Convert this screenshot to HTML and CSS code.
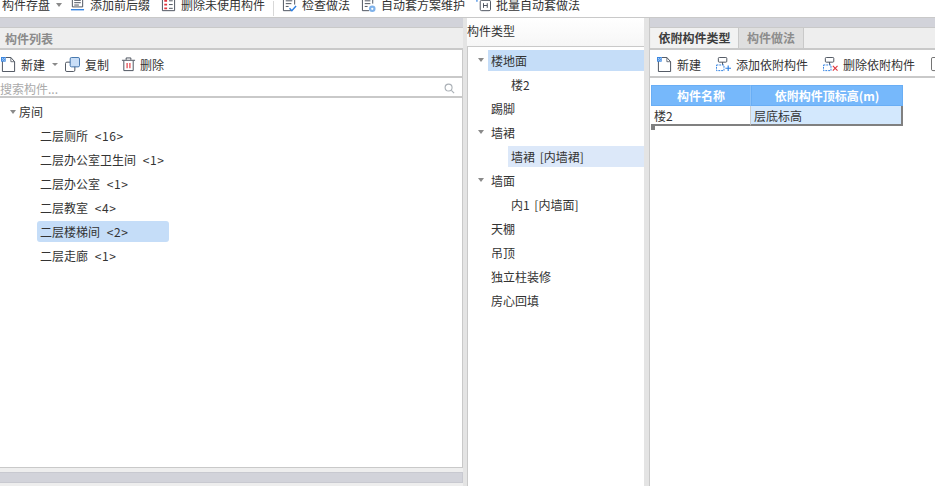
FILE: index.html
```html
<!DOCTYPE html>
<html lang="zh">
<head>
<meta charset="utf-8">
<title>构件</title>
<link rel="stylesheet" href="styles.css">
</head>
<body>
<div class="app">
  <div class="topbar">
    <span class="tb tb-save">构件存盘</span><i class="caret caret-top"></i>
    <svg class="ic15 tb-i1" viewBox="0 0 16 16"><path d="M2.500 0v9.500h11V0M4.500 2.500h7M4.500 5h7M4.500 7.500h5" fill="none" stroke="#444c58"/><path d="M1 12.500h14" stroke="#2a7de1" stroke-width="1.400"/></svg>
    <span class="tb">添加前后缀</span>
    <svg class="ic15 tb-i2" viewBox="0 0 16 16"><path d="M1.500 0v13.500h13V0" fill="none" stroke="#444c58"/><path d="M3.500 2h3v2h-3zM3.500 6h3v2h-3zM3.500 10h3v2h-3z" fill="#e0343c"/><path d="M8.500 3h4M8.500 7h4M8.500 11h4" stroke="#444c58"/></svg>
    <span class="tb">删除未使用构件</span>
    <i class="divider"></i>
    <svg class="ic15 tb-i3" viewBox="0 0 16 16"><path d="M1.500 0v13.500h8M13.500 0v7M4 3h7M4 6h6M4 9h3" fill="none" stroke="#444c58"/><path d="M8 11l2.500 2.500L15 8.500" fill="none" stroke="#2a7de1" stroke-width="1.500"/></svg>
    <span class="tb">检查做法</span>
    <svg class="ic15 tb-i4" viewBox="0 0 16 16"><path d="M1.500 0v13.500h7M12.500 0v6M4 3h6M4 6h6M4 9h3" fill="none" stroke="#444c58"/><circle cx="12" cy="11.500" r="3.500" fill="#7fb2ea"/><circle cx="12" cy="11.500" r="1.200" fill="#fff"/></svg>
    <span class="tb">自动套方案维护</span>
    <svg class="ic15 tb-i5" viewBox="0 0 16 16"><path d="M1 0v4M3.500 0v2" stroke="#2a7de1" stroke-width="1.200"/><rect x="4.500" y="2.500" width="11" height="11" rx="1.500" fill="none" stroke="#444c58"/><path d="M8 5.500v5M12 5.500v5M8 8h4" stroke="#444c58"/></svg>
    <span class="tb">批量自动套做法</span>
  </div>

  <div class="main">
    <section class="left">
      <div class="band"></div>
      <div class="panel-head"><span class="head-title">构件列表</span></div>
      <div class="tools">
        <svg class="ic15 lt-new" viewBox="0 0 16 16"><use href="#new-doc"/></svg>
        <span>新建</span>
        <i class="caret caret-new"></i>
        <svg class="ic15 lt-copy" viewBox="0 0 16 16"><rect x="0.500" y="5.500" width="10" height="10" rx="1.500" fill="#fff" stroke="#444c58"/><rect x="5.500" y="0.500" width="10" height="10" rx="1.500" fill="#c9def7" stroke="#3a6ea8"/></svg>
        <span>复制</span>
        <svg class="ic15 lt-del" viewBox="0 0 16 16"><path d="M1 3.500h14M5.500 3V1h5v2M3 4v10.500h10V4" fill="none" stroke="#444c58"/><path d="M6.500 6.500v5.500M9.500 6.500v5.500" stroke="#e0343c" stroke-width="1.200"/></svg>
        <span>删除</span>
      </div>
      <div class="search">
        <span class="search-ph">搜索构件...</span>
        <svg class="search-ic" viewBox="0 0 12 12"><circle cx="5" cy="5" r="3.800" fill="none" stroke="#aab0b6" stroke-width="1.200"/><path d="M8 8l3 3" stroke="#aab0b6" stroke-width="1.300"/></svg>
      </div>
      <div class="list">
        <div class="row root"><i class="caret caret-tree"></i><span class="cell">房间</span></div>
        <div class="row item"><span class="cell">二层厕所 <em>&lt;16&gt;</em></span></div>
        <div class="row item"><span class="cell">二层办公室卫生间 <em>&lt;1&gt;</em></span></div>
        <div class="row item"><span class="cell">二层办公室 <em>&lt;1&gt;</em></span></div>
        <div class="row item"><span class="cell">二层教室 <em>&lt;4&gt;</em></span></div>
        <div class="row item"><span class="cell active">二层楼梯间 <em>&lt;2&gt;</em></span></div>
        <div class="row item"><span class="cell">二层走廊 <em>&lt;1&gt;</em></span></div>
      </div>
      <div class="hscroll"><div class="thumb"></div></div>
    </section>

    <div class="splitter"></div>

    <section class="mid">
      <div class="mid-head">构件类型</div>
      <div class="mid-tree">
        <div class="node"><i class="caret caret-mid"></i><span class="label sel">楼地面</span></div>
        <div class="node child"><span class="label">楼2</span></div>
        <div class="node"><span class="label">踢脚</span></div>
        <div class="node"><i class="caret caret-mid"></i><span class="label">墙裙</span></div>
        <div class="node child"><span class="label sel2">墙裙 [内墙裙]</span></div>
        <div class="node"><i class="caret caret-mid"></i><span class="label">墙面</span></div>
        <div class="node child"><span class="label">内1 [内墙面]</span></div>
        <div class="node"><span class="label">天棚</span></div>
        <div class="node"><span class="label">吊顶</span></div>
        <div class="node"><span class="label">独立柱装修</span></div>
        <div class="node"><span class="label">房心回填</span></div>
      </div>
    </section>

    <div class="splitter2"></div>

    <section class="right">
      <div class="band"></div>
      <div class="tabs">
        <span class="tab on">依附构件类型</span>
        <span class="tab off">构件做法</span>
      </div>
      <div class="tools rtools">
        <svg class="ic15 rt-new" viewBox="0 0 16 16"><use href="#new-doc"/></svg>
        <span>新建</span>
        <svg class="ic15 rt-add" viewBox="0 0 16 16"><rect x="2.500" y="0.500" width="9" height="5" rx="1" fill="none" stroke="#444c58"/><path d="M7 5.500v3" stroke="#444c58"/><rect x="0.500" y="8.500" width="8" height="6" fill="none" stroke="#2a7de1" stroke-dasharray="2 1"/><path d="M10 12h6M13 9v6" stroke="#2a7de1" stroke-width="1.200"/></svg>
        <span>添加依附构件</span>
        <svg class="ic15 rt-del" viewBox="0 0 16 16"><rect x="2.500" y="0.500" width="9" height="5" rx="1" fill="none" stroke="#444c58"/><path d="M7 5.500v3" stroke="#444c58"/><rect x="0.500" y="8.500" width="8" height="6" fill="none" stroke="#2a7de1" stroke-dasharray="2 1"/><path d="M10.500 9.500l5 5M15.500 9.500l-5 5" stroke="#e0343c" stroke-width="1.200"/></svg>
        <span>删除依附构件</span>
        <svg class="ic15 rt-more" viewBox="0 0 16 16"><rect x="0.500" y="0.500" width="14" height="14" rx="1.500" fill="none" stroke="#666"/></svg>
      </div>
      <div class="table-wrap">
        <div class="grid">
          <div class="gh g1">构件名称</div>
          <div class="gh g2">依附构件顶标高(m)</div>
          <div class="gc g1">楼2</div>
          <div class="gc g2 cur">层底标高</div>
          <i class="handle"></i>
        </div>
      </div>
    </section>
  </div>
</div>
<svg class="defs" width="0" height="0">
  <defs>
    <g id="new-doc">
      <path d="M1.500 4v11.500h13V5L10.500 0.500H5" fill="none" stroke="#444c58"/>
      <path d="M10.500 0.500V5h4" fill="none" stroke="#444c58" stroke-width="0.800"/>
      <rect x="0" y="0" width="5" height="5" fill="#3a86e0"/>
      <path d="M1 1h1v1H1zM3 1h1v1H3zM2 2h1v1H2zM1 3h1v1H1zM3 3h1v1H3z" fill="#bcd8f6"/>
    </g>
  </defs>
</svg>
</body>
</html>
```
FILE: styles.css
```css
* { box-sizing: border-box; }
html, body { margin: 0; padding: 0; height: 100%; overflow: hidden; background: #fff; }
body { font-family: "Noto Sans CJK SC", "Liberation Sans", sans-serif; font-size: 12px; color: #333; }
i, em { font-style: normal; }
.defs { display: block; }
.app { width: 935px; height: 486px; display: flex; flex-direction: column; overflow: hidden; }

/* top toolbar */
.topbar { height: 18px; flex: none; display: flex; align-items: flex-end; overflow: hidden; border-bottom: 1px solid #c9c9c9; padding-bottom: 1px; white-space: nowrap; line-height: 22px; }
.tb { display: block; height: 22px; flex: none; margin-top: -6px; }
.tb-save { margin-left: 2px; }
.ic15 { width: 15px; height: 15px; flex: none; display: block; }
.topbar .ic15 { margin-right: 5px; align-self: flex-end; margin-bottom: 3px; }
.caret { display: block; flex: none; width: 0; height: 0; border-left: 3.500px solid transparent; border-right: 3.500px solid transparent; border-top: 4px solid #8a8a8a; }
.caret-top { margin: 0 0 9px 6px; }
.tb-i1 { margin-left: 8px; }
.tb-i2 { margin-left: 11px; }
.divider { width: 1px; height: 15px; background: #d8d8d8; margin: 0 8px; flex: none; }
.tb-i3 { margin-left: 0; }
.tb-i4 { margin-left: 11px; }
.tb-i5 { margin-left: 11px; }

/* layout */
.main { flex: 1; display: flex; min-height: 0; }
.left { width: 463px; flex: none; display: flex; flex-direction: column; }
.band { height: 10px; flex: none; background: #d2d3da; border-bottom: 1px solid #c9c9c9; }
.panel-head { height: 22px; flex: none; background: #eeeeee; border-bottom: 2px solid #c9c9c9; padding-left: 5px; line-height: 22px; }
.head-title { font-weight: 700; color: #8b8b8b; }

.tools { height: 28px; flex: none; display: flex; align-items: center; background: #fff; border-bottom: 2px solid #c9c9c9; border-right: 1px solid #c9c9c9; padding-top: 2px; white-space: nowrap; }
.lt-new { margin: 0 5px 0 1px; }
.caret-new { margin: 0 7px 0 7px; border-left-width: 3px; border-right-width: 3px; border-top-width: 3px; }
.lt-copy { margin-right: 5px; }
.lt-del { margin: 0 4px 0 12px; }

.search { height: 20px; flex: none; display: flex; align-items: center; justify-content: space-between; border-bottom: 2px solid #c9c9c9; border-right: 1px solid #c9c9c9; padding: 2px 7px 0 0; }
.search-ph { color: #aaaaaa; }
.search-ic { width: 11px; height: 11px; display: block; }

.list { flex: 1; min-height: 0; background: #fff; border-right: 1px solid #c9c9c9; border-bottom: 1px solid #c9c9c9; padding-top: 3px; }
.row { height: 24px; display: flex; align-items: flex-start; }
.root { padding-left: 10px; }
.caret-tree { margin: 9px 0 0 0; }
.item { padding-left: 37px; }
.cell { display: block; height: 21px; line-height: 21px; padding: 0 3px; border-radius: 3px; min-width: 0; }
.cell em { margin-left: 4px; letter-spacing: 0.600px; }
.active { width: 132px; background: #c5ddf8; }

.hscroll { height: 18px; flex: none; background: #eeeeee; padding: 4px 0 3px; }
.thumb { height: 11px; background: #d2d3da; border: 1px solid #c8c9d0; border-left: 0; }

.splitter { width: 4px; flex: none; background: #e4e4e4; }

/* middle */
.mid { width: 177px; flex: none; display: flex; flex-direction: column; background: #fff; }
.mid-head { height: 28px; flex: none; line-height: 26px; background: linear-gradient(#ffffff, #f6f6f6); }
.mid-tree { flex: 1; border-top: 1px solid #c9c9c9; border-left: 1px solid #c9c9c9; padding-top: 3px; }
.node { height: 24px; display: flex; align-items: flex-start; padding-left: 20px; position: relative; }
.node.child { padding-left: 40px; }
.label { flex: 1; display: block; height: 21px; line-height: 21px; padding-left: 3px; word-spacing: 2px; }
.sel { background: #c5ddf8; }
.sel2 { background: #dce8f9; }
.caret-mid { position: absolute; left: 10px; top: 8px; }

.splitter2 { width: 6px; flex: none; background: #e4e4e4; border-right: 1px solid #c9c9c9; }

/* right */
.right { flex: 1; min-width: 0; display: flex; flex-direction: column; }
.tabs { height: 22px; flex: none; display: flex; background: #eeeeee; border-bottom: 2px solid #c9c9c9; padding-left: 1px; }
.tab { display: block; height: 20px; line-height: 20px; font-weight: 700; text-align: center; flex: none; }
.tab.on { width: 88px; background: #f2f2f2; color: #3d3d3d; border-right: 1px solid #c9c9c9; }
.tab.off { width: 65px; background: #dfdfdf; color: #8d8d8d; border-right: 1px solid #c9c9c9; }
.rtools { border-right: 0; }
.rt-new { margin: 0 5px 0 7px; }
.rt-add { margin: 0 5px 0 15px; }
.rt-del { margin: 0 5px 0 15px; }
.rt-more { margin-left: 16px; }

.table-wrap { padding: 7px 0 0 1px; }
.grid { width: 252px; display: grid; grid-template-columns: 100px 152px; position: relative; }
.gh { height: 21px; line-height: 20px; text-align: center; background: #76b8fb; color: #fff; font-weight: 700; border: 1px solid #69aef5; }
.gh.g1 { border-right-color: #8cc2f8; }
.gc { height: 20px; line-height: 19px; padding-left: 3px; border-bottom: 2px solid #808080; }
.gc.g1 { background: #fff; border-right: 1px solid #cfcfcf; }
.gc.cur { background: #d3e8fd; border-right: 2px solid #808080; }
.handle { position: absolute; left: 0; bottom: -4px; width: 4px; height: 4px; background: #808080; }
```
